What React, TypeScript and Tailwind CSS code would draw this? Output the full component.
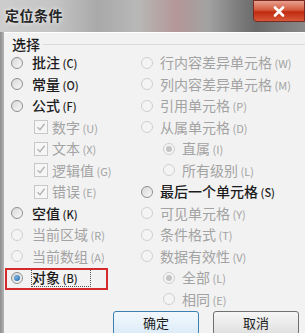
import React from "react";

type Item = {
  kind: "radio" | "check";
  label: string;
  key: string;
  enabled?: boolean;
  checked?: boolean;
  indent?: boolean;
  focus?: boolean;
};

const leftItems: Item[] = [
  { kind: "radio", label: "批注", key: "C", enabled: true },
  { kind: "radio", label: "常量", key: "O", enabled: true },
  { kind: "radio", label: "公式", key: "F", enabled: true },
  { kind: "check", label: "数字", key: "U", checked: true, indent: true },
  { kind: "check", label: "文本", key: "X", checked: true, indent: true },
  { kind: "check", label: "逻辑值", key: "G", checked: true, indent: true },
  { kind: "check", label: "错误", key: "E", checked: true, indent: true },
  { kind: "radio", label: "空值", key: "K", enabled: true },
  { kind: "radio", label: "当前区域", key: "R" },
  { kind: "radio", label: "当前数组", key: "A" },
  { kind: "radio", label: "对象", key: "B", enabled: true, checked: true, focus: true },
];

const rightItems: Item[] = [
  { kind: "radio", label: "行内容差异单元格", key: "W" },
  { kind: "radio", label: "列内容差异单元格", key: "M" },
  { kind: "radio", label: "引用单元格", key: "P" },
  { kind: "radio", label: "从属单元格", key: "D" },
  { kind: "radio", label: "直属", key: "I", checked: true, indent: true },
  { kind: "radio", label: "所有级别", key: "L", indent: true },
  { kind: "radio", label: "最后一个单元格", key: "S", enabled: true },
  { kind: "radio", label: "可见单元格", key: "Y" },
  { kind: "radio", label: "条件格式", key: "T" },
  { kind: "radio", label: "数据有效性", key: "V" },
  { kind: "radio", label: "全部", key: "L", checked: true, indent: true },
  { kind: "radio", label: "相同", key: "E", indent: true },
];

function Radio({ enabled, checked }: { enabled?: boolean; checked?: boolean }) {
  return (
    <span
      className={
        "flex h-[12px] w-[12px] shrink-0 items-center justify-center rounded-full border " +
        (enabled
          ? "border-[#8e8f8f] bg-[linear-gradient(135deg,#d8d8d8,#f8f8f8)]"
          : "border-[#cfcfcf] bg-[#f4f4f4]")
      }
    >
      {checked && (
        <span
          className={
            "h-[6px] w-[6px] rounded-full " +
            (enabled ? "bg-[radial-gradient(circle_at_35%_35%,#7ab8e8,#1d5c9c)]" : "bg-[#c4c4c4]")
          }
        />
      )}
    </span>
  );
}

function Check({ checked }: { checked?: boolean }) {
  return (
    <span className="flex h-[14px] w-[14px] shrink-0 items-center justify-center border border-[#c8c8c8] bg-[#f6f6f6]">
      {checked && (
        <svg width="10" height="10" viewBox="0 0 10 10">
          <path d="M1.5 5.2 L4 7.8 L8.6 1.8" fill="none" stroke="#b4b4b4" strokeWidth="1.4" />
        </svg>
      )}
    </span>
  );
}

function Row({ item, side }: { item: Item; side: "left" | "right" }) {
  const color = item.enabled ? "text-[#1c1c1c]" : "text-[#a3a3a3]";
  let pad = side === "left" ? "pl-[7px]" : "pl-[6px]";
  if (item.indent) pad = side === "left" ? "pl-[30px]" : "pl-[28px]";
  const gap = item.kind === "check" ? "gap-[4px]" : side === "left" ? "gap-[9px]" : "gap-[7px]";
  return (
    <div className={"flex h-[21.5px] items-center " + pad + " " + gap}>
      {item.kind === "radio" ? <Radio enabled={item.enabled} checked={item.checked} /> : <Check checked={item.checked} />}
      <span
        className={
          "whitespace-nowrap text-[14px] leading-[16px] " +
          color +
          (item.enabled ? " font-medium" : "") +
          (item.focus ? " outline outline-1 outline-dotted outline-[#555] pr-[12px]" : "")
        }
      >
        {item.label}
        <span className="text-[11px]"> ({item.key})</span>
      </span>
    </div>
  );
}

export default function App() {
  return (
    <div
      className="relative h-[333px] w-[305px] overflow-hidden bg-[#f0f0f0]"
      style={{ fontFamily: '"Noto Sans CJK SC", "Noto Sans", sans-serif' }}
    >
      {/* title bar */}
      <div className="relative flex h-[32px] items-start bg-[linear-gradient(90deg,#cdcdcd_0%,#c4c4c4_18%,#a9a9a9_32%,#b8b8b8_45%,#b49696_58%,#a3a3a3_68%,#7d7d7d_78%,#6a6a6a_84%,#8a8a8a_100%)]">
        <span className="ml-[5px] mt-[6px] text-[14px] font-bold leading-[18px] tracking-[0.5px] text-[#262626] [text-shadow:0_0_4px_#ffffff]">
          定位条件
        </span>
        <div className="absolute right-0 top-0 flex h-[22px] w-[52px] items-center justify-center rounded-bl-[4px] border border-[#7a2a20] bg-[linear-gradient(180deg,#e8a090_0%,#d45a3c_45%,#c02a10_55%,#d8583a_100%)]">
          <svg width="12" height="11" viewBox="0 0 12 11">
            <path d="M2 1.5 L10 9.5 M10 1.5 L2 9.5" stroke="#ffffff" strokeWidth="2.6" strokeLinecap="round" />
          </svg>
        </div>
      </div>

      {/* body */}
      <div className="flex h-[301px]">
        <div className="w-[4px] bg-[linear-gradient(90deg,#8c8c8c,#b5b5b5)]" />
        <div className="flex flex-1 flex-col border-t border-[#ffffff] bg-[#f2f2f2]">
          <div className="relative mt-[3px] flex h-[20px] items-center pl-[8px]">
            <span className="text-[14px] font-medium leading-[16px] text-[#1c1c1c]">选择</span>
            <div className="ml-[3px] h-px flex-1 bg-[#dcdcdc]" />
          </div>
          <div className="flex">
            <div className="relative w-[131px]">
              {leftItems.map((it, i) => (
                <Row key={i} item={it} side="left" />
              ))}
              <div className="pointer-events-none absolute left-[1px] top-[216px] h-[22px] w-[103px] border-2 border-[#d42a2a]" />
            </div>
            <div className="flex-1">
              {rightItems.map((it, i) => (
                <Row key={i} item={it} side="right" />
              ))}
            </div>
          </div>
          <div className="mt-[1px] flex gap-[14px] pl-[109px]">
            <div className="flex h-[24px] w-[86px] items-center justify-center rounded-[3px] border border-[#3c7fb1] bg-[linear-gradient(180deg,#f2f8fc,#dcecf8)] text-[13px] text-[#1c1c1c]">
              确定
            </div>
            <div className="flex h-[24px] w-[86px] items-center justify-center rounded-[3px] border border-[#707070] bg-[linear-gradient(180deg,#f6f6f6,#e0e0e0)] text-[13px] text-[#1c1c1c]">
              取消
            </div>
          </div>
        </div>
      </div>
    </div>
  );
}
